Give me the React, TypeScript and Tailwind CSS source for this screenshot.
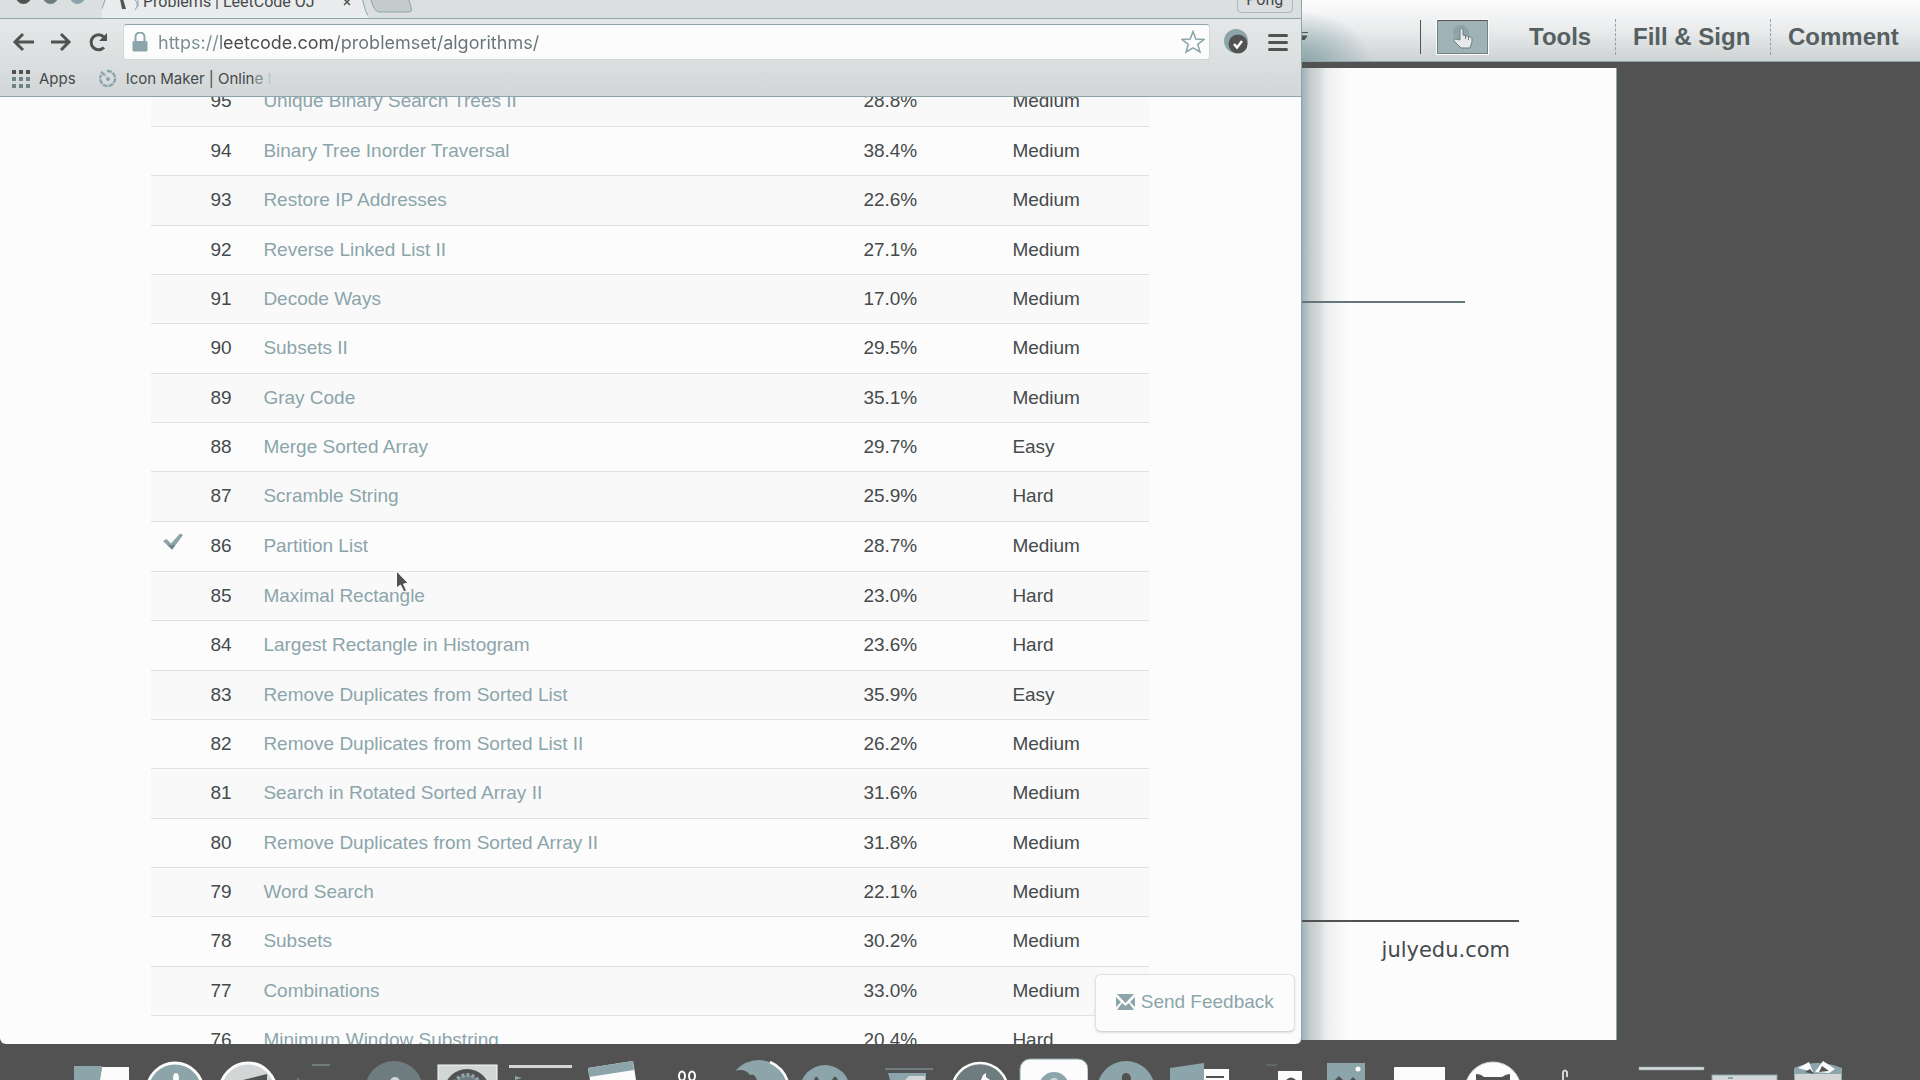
import React from "react";

type Problem = { id: number; title: string; rate: string; level: string; done?: boolean };

const problems: Problem[] = [
  { id: 95, title: "Unique Binary Search Trees II", rate: "28.8%", level: "Medium" },
  { id: 94, title: "Binary Tree Inorder Traversal", rate: "38.4%", level: "Medium" },
  { id: 93, title: "Restore IP Addresses", rate: "22.6%", level: "Medium" },
  { id: 92, title: "Reverse Linked List II", rate: "27.1%", level: "Medium" },
  { id: 91, title: "Decode Ways", rate: "17.0%", level: "Medium" },
  { id: 90, title: "Subsets II", rate: "29.5%", level: "Medium" },
  { id: 89, title: "Gray Code", rate: "35.1%", level: "Medium" },
  { id: 88, title: "Merge Sorted Array", rate: "29.7%", level: "Easy" },
  { id: 87, title: "Scramble String", rate: "25.9%", level: "Hard" },
  { id: 86, title: "Partition List", rate: "28.7%", level: "Medium", done: true },
  { id: 85, title: "Maximal Rectangle", rate: "23.0%", level: "Hard" },
  { id: 84, title: "Largest Rectangle in Histogram", rate: "23.6%", level: "Hard" },
  { id: 83, title: "Remove Duplicates from Sorted List", rate: "35.9%", level: "Easy" },
  { id: 82, title: "Remove Duplicates from Sorted List II", rate: "26.2%", level: "Medium" },
  { id: 81, title: "Search in Rotated Sorted Array II", rate: "31.6%", level: "Medium" },
  { id: 80, title: "Remove Duplicates from Sorted Array II", rate: "31.8%", level: "Medium" },
  { id: 79, title: "Word Search", rate: "22.1%", level: "Medium" },
  { id: 78, title: "Subsets", rate: "30.2%", level: "Medium" },
  { id: 77, title: "Combinations", rate: "33.0%", level: "Medium" },
  { id: 76, title: "Minimum Window Substring", rate: "20.4%", level: "Hard" },
];

const D = "#525252";
const T = "#8ba5aa";
const L = "#d2d6d7";
const W = "#fcfcfc";
const M = "#6f7c7f";

function TabStrip() {
  return (
    <div className="relative flex h-[19px] items-end overflow-hidden border-b border-[#8ba5aa] bg-[#dcdfe0]">
      <div className="flex w-[102px] shrink-0 gap-3 self-start pl-4">
        <button aria-label="Close window" className="-mt-[11px] size-[15px] rounded-full bg-[#525252]" />
        <button aria-label="Minimize window" className="-mt-[11px] size-[15px] rounded-full bg-[#6f7c7f]" />
        <button aria-label="Zoom window" className="-mt-[11px] size-[15px] rounded-full bg-[#8ba5aa]" />
      </div>
      <div className="relative h-[19px] w-[266px] shrink-0">
        <svg className="absolute inset-0 h-full w-full" viewBox="0 0 266 19" aria-hidden="true">
          <path d="M-6 19 Q-2 18 4 -2 H260 Q264 17 268 19 Z" fill="#eaeced" />
          <path d="M-6 18.5 Q-2 18 4 -2 M260 -2 Q264 17 268 18.5" fill="none" stroke={T} />
          <path d="M18 0 L20 10 H24 L21 0 Z" fill={D} />
          <path d="M32 0 Q38 5 33 11 M36 0 V8" fill="none" stroke={T} />
        </svg>
        <div className="relative -mt-[9px] flex items-center justify-between pl-[41px] pr-[17px]">
          <span className="text-[16px] leading-6 whitespace-nowrap">Problems | LeetCode OJ</span>
          <button aria-label="Close tab" className="size-2">
            <svg viewBox="0 0 8 8"><path d="M1 1 L7 7 M7 1 L1 7" stroke={D} strokeWidth="1.5" /></svg>
          </button>
        </div>
      </div>
      <button aria-label="New tab" className="h-[19px] w-12 shrink-0">
        <svg viewBox="0 0 48 19" className="h-full w-full">
          <path d="M2 -2 Q6 13 11 13 H40 Q45 13 43 8 L40 -2 Z" fill="#c3cbcd" stroke={T} />
        </svg>
      </button>
      <button className="mr-2 ml-auto h-[26px] w-[56px] -translate-y-[5px] rounded border border-[#a9b9bc] text-[16px] leading-[14px]">
        Pong
      </button>
    </div>
  );
}

function Toolbar() {
  return (
    <div className="flex h-[46px] items-center pl-3">
      <button aria-label="Back" className="size-6">
        <svg viewBox="0 0 24 24"><path d="M22 12 H3 M11 4 L3 12 L11 20" fill="none" stroke={D} strokeWidth="3" /></svg>
      </button>
      <button aria-label="Forward" className="ml-[13px] size-6">
        <svg viewBox="0 0 24 24"><path d="M2 12 H20 M12 4 L20 12 L12 20" fill="none" stroke={D} strokeWidth="3" /></svg>
      </button>
      <button aria-label="Reload" className="ml-[14px] size-6">
        <svg viewBox="0 0 24 24">
          <path d="M17 17.500 A7.500 7.500 0 1 1 17 7" fill="none" stroke={D} strokeWidth="3" />
          <path d="M20 3 V11 H12 Z" fill={D} />
        </svg>
      </button>
      <div className="ml-[12px] flex h-[36px] min-w-0 flex-1 items-center rounded border border-[#d2d6d7] border-t-[#8ba5aa] bg-[#fcfcfc] pr-1 pl-2">
        <svg className="h-5 w-[16px] shrink-0" viewBox="0 0 16 20" aria-hidden="true">
          <path d="M3.500 10 V5 A4.500 4.500 0 0 1 12.500 5 V10" fill="none" stroke={T} strokeWidth="2" />
          <rect x="0.500" y="9" width="15" height="10.500" rx="1" fill={T} />
        </svg>
        <input
          aria-label="Address"
          defaultValue="https://leetcode.com/problemset/algorithms/"
          className="ml-[10px] h-8 min-w-0 flex-1 bg-[linear-gradient(90deg,#7a8e92_63px,#4a4a4a_63px,#4a4a4a_179px,#677477_179px)] bg-clip-text font-[Inter,sans-serif] text-[18px] text-transparent outline-none"
        />
        <button aria-label="Bookmark this page" className="size-6">
          <svg viewBox="0 0 24 24">
            <path d="M12 1.500 L14.800 9 L23 9.500 L16.700 14.300 L19 22 L12 17.800 L5 22 L7.300 14.300 L1 9.500 L9.200 9 Z" fill={W} stroke={T} strokeWidth="1.500" />
          </svg>
        </button>
      </div>
      <button aria-label="Extension" className="ml-[14px] size-[26px]">
        <svg viewBox="0 0 26 26">
          <circle cx="12" cy="12" r="12" fill={T} />
          <circle cx="14" cy="15" r="9.500" fill={D} />
          <path d="M10 15 L13 18.500 L18 12" fill="none" stroke={W} strokeWidth="2.500" />
        </svg>
      </button>
      <button aria-label="Menu" className="mr-[13px] ml-[18px] flex h-6 w-5 flex-col justify-center gap-1">
        <span className="h-[3px] rounded bg-[#525252]" />
        <span className="h-[3px] rounded bg-[#525252]" />
        <span className="h-[3px] rounded bg-[#525252]" />
      </button>
    </div>
  );
}

function Bookmarks() {
  return (
    <div className="flex h-[32px] items-center border-b border-[#8ba5aa] pb-1 pl-3 font-[Inter,sans-serif] text-[15px] leading-5">
      <a href="#apps" className="flex items-center gap-[9px]">
        <span className="grid grid-cols-3 gap-[3px]" aria-hidden="true">
          {[0, 1, 2, 3, 4, 5, 6, 7, 8].map((i) => (
            <span key={i} className={i < 3 ? "size-1 bg-[#525252]" : "size-1 bg-[#6f8286]"} />
          ))}
        </span>
        Apps
      </a>
      <a href="#icon-maker" className="ml-[22px] flex items-center gap-2">
        <svg className="size-5" viewBox="0 0 20 20" aria-hidden="true">
          <path d="M3 3 L8 7 M9 2 A7.500 7.500 0 1 1 3 6" fill="none" stroke={T} strokeWidth="2.500" strokeDasharray="5 1" />
          <circle cx="10" cy="10" r="2" fill={T} />
        </svg>
        <span className="whitespace-nowrap">
          Icon Maker | Onlin<span className="text-[#7d8a8d]">e</span> <span className="text-[#bcc4c6]">I</span>
        </span>
      </a>
    </div>
  );
}

function ProblemTable() {
  return (
    <table className="-mt-5 w-full table-fixed border-collapse font-['Liberation_Sans',Arial,sans-serif] text-[19px] leading-6">
      <colgroup>
        <col className="w-[47px]" />
        <col className="w-[53px]" />
        <col />
        <col className="w-[149px]" />
        <col className="w-[149px]" />
      </colgroup>
      <tbody>
        {problems.map((p) => (
          <tr key={p.id} className="h-[49px] border-b border-[#dfe2e3] odd:bg-[#f9f9f9] nth-[3n]:h-[50px] nth-[10]:h-[50px]">
            <td className="pl-3">
              {p.done && (
                <svg className="-mt-2 h-[18px] w-5" viewBox="0 0 20 18" role="img" aria-label="Solved">
                  <path d="M0 8 L3.500 6 L8 10.500 L17 0.500 L20 2 L9 17 Z" fill={T} />
                  <path d="M6 12 L9 14.500 L11 12" fill="none" stroke="#667679" strokeWidth="1.500" />
                </svg>
              )}
            </td>
            <td className="pl-3">{p.id}</td>
            <td className="pl-3">
              <a href={`#problem-${p.id}`} className="text-[#8ba5aa]">{p.title}</a>
            </td>
            <td className="pl-3">{p.rate}</td>
            <td className="pl-3">{p.level}</td>
          </tr>
        ))}
      </tbody>
    </table>
  );
}

function Browser() {
  return (
    <section className="relative flex h-full w-[67.8%] shrink-0 flex-col overflow-hidden rounded-b-md border-r border-[#8ba5aa] bg-[#fcfcfc] font-[Roboto,sans-serif]">
      <header className="bg-linear-to-b from-[#eaeced] via-[#dfe2e3] to-[#d2d6d7]">
        <TabStrip />
        <Toolbar />
        <Bookmarks />
      </header>
      <main className="min-h-0 flex-1 overflow-hidden">
        <div className="mx-auto w-[998px] max-w-full">
          <ProblemTable />
        </div>
      </main>
      <button className="absolute right-[6px] bottom-3 flex h-[58px] w-[200px] items-center justify-center gap-[6px] rounded-md border border-[#dfe2e3] border-b-[#d2d6d7] bg-[#fcfcfc] pb-[2px] font-['Liberation_Sans',Arial,sans-serif] text-[19px] text-[#8ba5aa] shadow-sm">
        <svg className="h-4 w-[19px]" viewBox="0 0 19 16" aria-hidden="true">
          <path d="M1 0 H18 L9.500 9 Z M0 3 L5 8 L0 13 Z M19 3 L14 8 L19 13 Z M6 9 L9.500 12 L13 9 L18 16 H1 Z" fill={T} />
        </svg>
        Send Feedback
      </button>
    </section>
  );
}

function Reader() {
  return (
    <section className="flex h-full min-w-0 flex-1 flex-col pb-1 font-['Liberation_Sans',Arial,sans-serif]">
      <header className="relative flex h-[62px] items-center border-b border-[#8ba5aa] bg-linear-to-b from-[#fcfcfc] via-[#e9ebec] to-[#cdd2d3] text-[24px] font-bold text-[#566062]">
        <div className="pointer-events-none absolute inset-0 bg-[radial-gradient(ellipse_70px_50px_at_0px_62px,#8ba5aa,transparent)]" />
        <svg className="absolute top-8 left-0 h-2 w-2" viewBox="0 0 8 8" aria-hidden="true">
          <path d="M0 0.500 H6 M0 4 H5 L2 8 H0 Z" fill={D} stroke={D} />
        </svg>
        <div className="relative ml-auto flex items-center pt-[13px]">
          <span className="h-[34px] w-px bg-[#525252]" />
          <button aria-label="Hand tool" className="ml-4 flex h-[34px] w-[51px] items-center justify-center border border-[#6f8286] border-t-[#525252] bg-[#9fb3b7] shadow-[0_0_0_1px_#fcfcfc]">
            <svg className="size-6" viewBox="0 0 24 24" aria-hidden="true">
              <circle cx="10" cy="8" r="8" fill="#8ba5aa" />
              <path d="M9 15 V4 Q10.500 2 12 4 V10 L20 12 Q21.500 13 21 17 L19 23 H10 L3 16 Q2 13.500 5 14 Z" fill="#e6e9ea" stroke="#6f7c7f" />
              <path d="M14.500 11 V14 M17.500 12 V15" stroke="#6f7c7f" />
            </svg>
          </button>
          <button className="ml-[41px] w-[86px] text-left">Tools</button>
          <button className="h-9 w-[155px] border-l border-dashed border-[#8ba5aa] pl-[17px] text-left whitespace-nowrap">Fill &amp; Sign</button>
          <button className="h-9 w-[150px] border-l border-dashed border-[#8ba5aa] pl-[17px] text-left">Comment</button>
        </div>
      </header>
      <article className="mt-[6px] flex w-[51%] flex-1 flex-col border-r border-[#8ba5aa] bg-[#fcfcfc] bg-[linear-gradient(90deg,#9fb3b7,#c6cdcf_9px,#d2d6d7_16px,#eceeee_24px,#fcfcfc_46px)]">
        <hr className="mt-[233px] mr-[151px] border-t-2 border-[#64787c]" />
        <div className="mt-auto mr-[97px] mb-[76px] border-t-2 border-[#525252] pt-[14px] pr-[9px] text-right font-['DejaVu_Sans',sans-serif] text-[21px] leading-[28px]">
          julyedu.com
        </div>
      </article>
    </section>
  );
}

const dockIcons: { name: string; art: React.ReactNode }[] = [
  { name: "Finder", art: <><path d="M8 22 H36 L34 36 H8 Z" fill={T} /><path d="M36 23 H63 V36 H34 Z" fill={W} /></> },
  { name: "Safari", art: <><circle cx="36" cy="47" r="28" fill={T} stroke={W} strokeWidth="3" /><ellipse cx="37" cy="34" rx="3" ry="5" fill={W} /></> },
  { name: "Launchpad", art: <><circle cx="36" cy="47" r="28" fill={L} stroke={W} strokeWidth="3" /><path d="M31 36 L55 30 V36 Z" fill={D} /></> },
  { name: "Utility", art: <path d="M27 20 H45 V22 H27 Z M12 33 l3 3 h-3 Z" fill={M} /> },
  { name: "Player", art: <><circle cx="36" cy="46" r="29" fill={M} /><circle cx="37" cy="38" r="5" fill={L} /></> },
  { name: "Settings", art: <><rect x="7" y="21" width="59" height="20" fill={L} stroke={W} /><circle cx="36" cy="48" r="23" fill={D} /><circle cx="36" cy="45" r="14" fill={M} stroke={T} strokeWidth="4" strokeDasharray="3 2" /></> },
  { name: "Terminal", art: <><path d="M5 21 H68 V24 H5 Z" fill={L} /><path d="M11 36 V32 L18 34 Z" fill={T} /></> },
  { name: "Notes", art: <><path d="M11 24 L56 17 L59 36 H13 Z" fill={W} /><path d="M11 24 L56 17 L57 26 L12 33 Z" fill={T} /></> },
  { name: "Finder eyes", art: <><ellipse cx="32" cy="32" rx="3" ry="4.5" fill={D} stroke={W} strokeWidth="2" /><ellipse cx="42" cy="32" rx="3" ry="4.5" fill={D} stroke={W} strokeWidth="2" /></> },
  { name: "Globe", art: <><path d="M12 27 Q22 16 36 16 Q55 17 66 36 H34 Q31 29 27 31 Q22 24 12 27 Z" fill={T} /><path d="M47 18 Q60 24 64 36" fill="none" stroke={W} strokeWidth="2.5" /></> },
  { name: "Messenger", art: <><circle cx="29" cy="46" r="25" fill={T} /><path d="M18 36 Q20 29 23 36 Z M36 36 Q39 29 42 36 Z" fill={D} /></> },
  { name: "Presentation", art: <><path d="M16 25 H64" stroke={M} strokeWidth="2" /><path d="M19 29 H57 V36 H21 Z" fill={T} /><path d="M40 32 H56 V36 H36 Z" fill={L} /></> },
  { name: "Clock", art: <><circle cx="38" cy="47" r="28" fill={M} stroke={W} strokeWidth="2.5" /><path d="M39 36 L41 31 L44 29 V33 L48 36 Z" fill={W} /></> },
  { name: "Photos", art: <><rect x="5" y="15" width="68" height="40" rx="10" fill={W} stroke={T} /><circle cx="39" cy="43" r="15" fill={T} /><circle cx="39" cy="39" r="5" fill={L} /></> },
  { name: "Profile", art: <><circle cx="38" cy="46" r="29" fill={T} /><path d="M34 36 Q33 29 38 29 Q43 29 43 36 Z" fill={D} /></> },
  { name: "Mail", art: <><path d="M9 24 L43 19 V36 H9 Z" fill={T} /><path d="M43 25 H68 V36 H43 Z" fill={W} /><path d="M45 33 H63" stroke={D} strokeWidth="2" /></> },
  { name: "Document", art: <><path d="M32 21 H43" stroke={M} /><path d="M44 27 H68 V36 H44 Z" fill={W} /><path d="M52 36 Q57 31 62 36 Z" fill={D} /></> },
  { name: "Preview", art: <><path d="M20 19 H58 V36 H20 Z" fill={T} /><circle cx="51" cy="25" r="2.500" fill={W} /><path d="M28 36 L32 32 L36 36 Z M43 36 L46 33 L49 36 Z" fill={D} /></> },
  { name: "Paper", art: <path d="M14 24 Q14 23 15 23 H65 V36 H14 Z" fill={W} /> },
  { name: "GitHub", art: <><circle cx="40" cy="46" r="28" fill={W} stroke={L} /><path d="M23 36 V30 Q28 30 31 33 H49 Q53 30 57 30 V36 Z" fill={D} /></> },
  { name: "Hook", art: <path d="M37 36 V28 Q39 25 41 28 V33" fill="none" stroke={L} strokeWidth="2" /> },
];

const dockStacks: { name: string; art: React.ReactNode }[] = [
  { name: "Window", art: <path d="M4 23 H69 V26 H4 Z" fill={L} stroke={T} strokeWidth="0.5" /> },
  { name: "Downloads", art: <><rect x="4" y="31" width="65" height="10" fill={L} stroke={T} /><path d="M20 33 h5 v2 h-5 Z" fill={T} /></> },
  { name: "Trash", art: <><path d="M13 24 Q36 14 61 24 V36 H13 Z" fill={T} /><path d="M14 30 H60 V36 H14 Z" fill={L} /><path d="M17 24 L28 18 L32 28 Z M34 28 L42 17 L54 25 L48 29 Z" fill={W} /><path d="M24 28 L29 25 L33 30 Z M38 28 L41 22 L48 27 Z" fill={D} /></> },
];

function Dock() {
  return (
    <nav aria-label="Dock" className="flex h-9 shrink-0 overflow-hidden pl-[66px]">
      {dockIcons.map((i) => (
        <button key={i.name} aria-label={i.name} className="h-9 w-[73px] shrink-0">
          <svg viewBox="0 0 73 36" className="h-full w-full">{i.art}</svg>
        </button>
      ))}
      <div className="ml-9 flex">
        {dockStacks.map((i) => (
          <button key={i.name} aria-label={i.name} className="h-9 w-[73px] shrink-0">
            <svg viewBox="0 0 73 36" className="h-full w-full">{i.art}</svg>
          </button>
        ))}
      </div>
    </nav>
  );
}

export default function App() {
  return (
    <div className="relative flex h-screen flex-col overflow-hidden bg-[#525252] text-[#454a4b]">
      <div className="flex min-h-0 flex-1">
        <Browser />
        <Reader />
      </div>
      <Dock />
      <svg className="pointer-events-none absolute top-[570px] left-[395px] h-6 w-4" viewBox="0 0 16 24" aria-hidden="true">
        <path d="M1.500 1 V18 L5.500 15 L9 22 L11.500 20.500 L8.500 14 L13 13 Z" fill={D} stroke={W} />
      </svg>
    </div>
  );
}
